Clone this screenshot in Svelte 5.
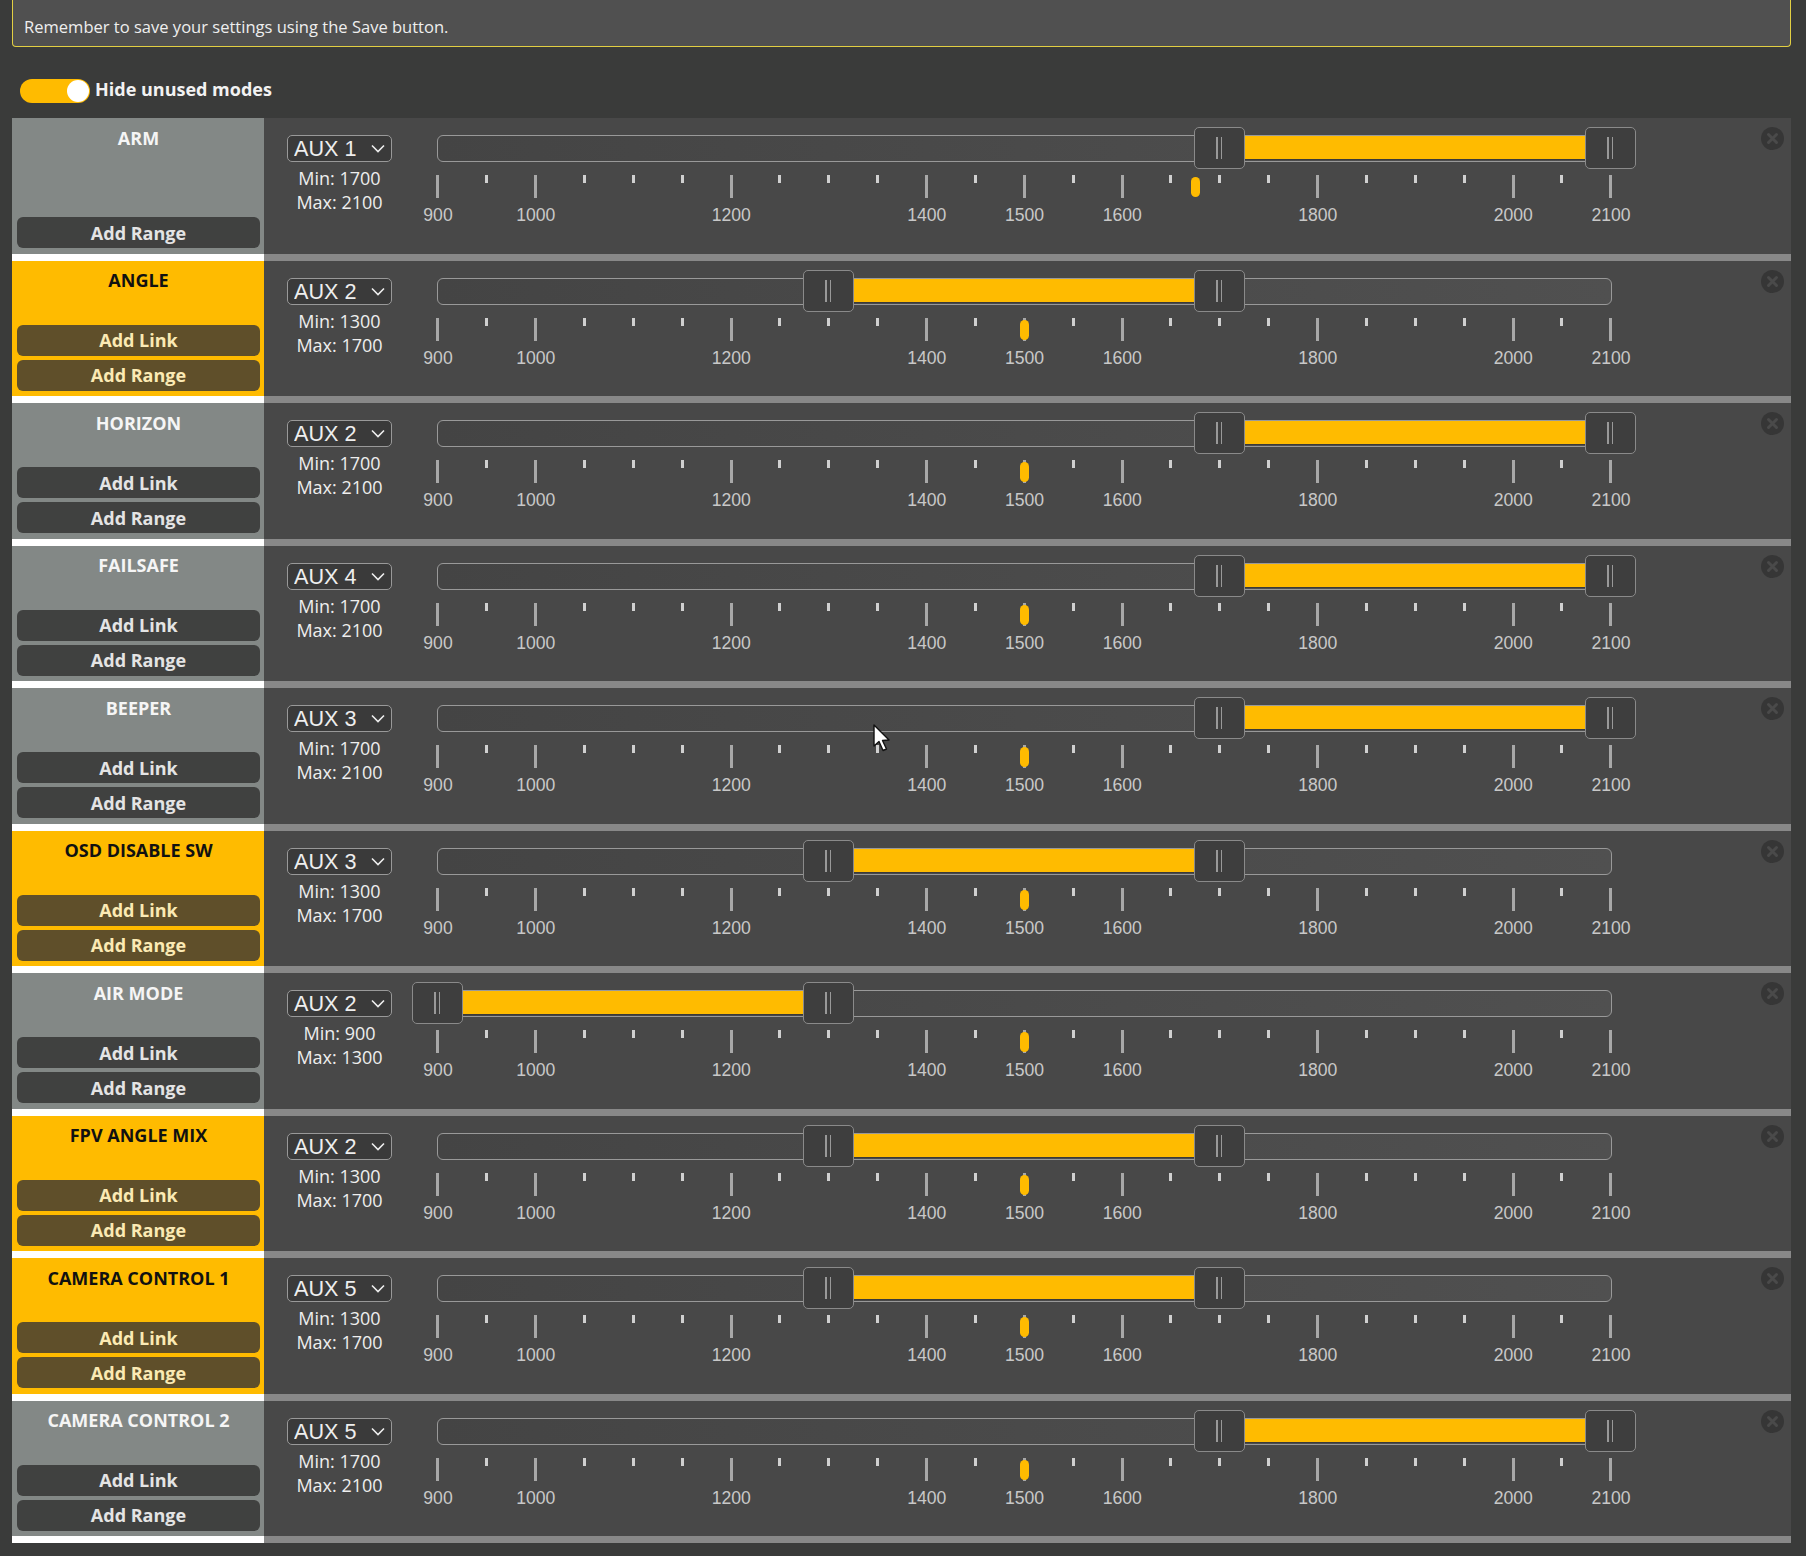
<script>
  const modes = [
    { name: 'ARM', aux: 'AUX 1', min: 1700, max: 2100, on: false, link: false, value: 1675 },
    { name: 'ANGLE', aux: 'AUX 2', min: 1300, max: 1700, on: true, link: true, value: 1500 },
    { name: 'HORIZON', aux: 'AUX 2', min: 1700, max: 2100, on: false, link: true, value: 1500 },
    { name: 'FAILSAFE', aux: 'AUX 4', min: 1700, max: 2100, on: false, link: true, value: 1500 },
    { name: 'BEEPER', aux: 'AUX 3', min: 1700, max: 2100, on: false, link: true, value: 1500 },
    { name: 'OSD DISABLE SW', aux: 'AUX 3', min: 1300, max: 1700, on: true, link: true, value: 1500 },
    { name: 'AIR MODE', aux: 'AUX 2', min: 900, max: 1300, on: false, link: true, value: 1500 },
    { name: 'FPV ANGLE MIX', aux: 'AUX 2', min: 1300, max: 1700, on: true, link: true, value: 1500 },
    { name: 'CAMERA CONTROL 1', aux: 'AUX 5', min: 1300, max: 1700, on: true, link: true, value: 1500 },
    { name: 'CAMERA CONTROL 2', aux: 'AUX 5', min: 1700, max: 2100, on: false, link: true, value: 1500 }
  ]

  const auxes = ['AUX 1', 'AUX 2', 'AUX 3', 'AUX 4', 'AUX 5']
  const big = [900, 1000, 1200, 1400, 1500, 1600, 1800, 2000, 2100]
  const small = [950, 1050, 1100, 1150, 1250, 1300, 1350, 1450, 1550, 1650, 1700, 1750, 1850, 1900, 1950, 2050]

  const pct = (v) => ((v - 900) / 1200) * 100
</script>

<div class="page">
  <div class="note">Remember to save your settings using the Save button.</div>

  <div class="filter">
    <span class="toggle"><span class="knob"></span></span>
    <span class="filter-label">Hide unused modes</span>
  </div>

  {#each modes as mode}
    <div class="mode">
      <div class="info" class:on={mode.on}>
        <div class="name">{mode.name}</div>
        <div class="buttons">
          {#if mode.link}
            <button>Add Link</button>
          {/if}
          <button>Add Range</button>
        </div>
      </div>

      <div class="range">
        <div class="channel">
          <div class="select-wrap">
            <select value={mode.aux}>
              {#each auxes as a}
                <option>{a}</option>
              {/each}
            </select>
            <svg class="chevron" viewBox="0 0 14 9" width="14" height="9">
              <path d="M1 1.5 L7 7.5 L13 1.5" fill="none" stroke="#eee" stroke-width="1.6" />
            </svg>
          </div>
          <div class="limits">Min: {mode.min}<br />Max: {mode.max}</div>
        </div>

        <div class="slider-col">
          <div class="track">
            <div
              class="connect"
              style="left: {pct(mode.min)}%; width: {pct(mode.max) - pct(mode.min)}%"
            ></div>
            {#each [mode.min, mode.max] as v}
              <div class="handle" style="left: {pct(v)}%"><i></i><i></i></div>
            {/each}
          </div>
          <div class="pips">
            {#each small as v}
              <span class="tick small" style="left: {pct(v)}%"></span>
            {/each}
            {#each big as v}
              <span class="tick big" style="left: {pct(v)}%"></span>
              <span class="pip-label" style="left: {pct(v)}%">{v}</span>
            {/each}
            <span class="marker" style="left: {pct(mode.value)}%"></span>
          </div>
        </div>

        <span class="delete">
          <svg viewBox="0 0 23 23" width="23" height="23">
            <circle cx="11.5" cy="11.5" r="11.5" fill="#363636" />
            <path d="M7.5 7.5 L15.5 15.5 M15.5 7.5 L7.5 15.5" stroke="#4a4a4a" stroke-width="3" stroke-linecap="round" />
          </svg>
        </span>
      </div>
    </div>
  {/each}

  <svg class="cursor" viewBox="0 0 19 29" width="19" height="29">
    <path d="M1 1 L1 22 L6 17.5 L10 26.5 L13.5 25 L9.5 16.5 L16 16 Z" fill="#fff" stroke="#111" stroke-width="1.4" stroke-linejoin="round" />
  </svg>
</div>

<style>
  :global(body) {
    margin: 0;
    background: #3a3b3a;
  }

  .page {
    position: relative;
    width: 1806px;
    height: 1556px;
    box-sizing: border-box;
    padding: 0 15px 0 12px;
    font-family: 'Open Sans', sans-serif;
    overflow: hidden;
  }

  .note {
    box-sizing: border-box;
    height: 47px;
    padding: 17px 11px 0;
    border: 1px solid #e2cf43;
    border-top: none;
    border-radius: 0 0 4px 4px;
    background: #505050;
    color: #eee;
    font-size: 16.55px;
    line-height: 20px;
  }

  .filter {
    display: flex;
    align-items: center;
    gap: 5px;
    height: 24px;
    margin: 32px 0 15px 8px;
  }

  .toggle {
    position: relative;
    width: 70px;
    height: 24px;
    border-radius: 12px;
    background: #ffbb00;
  }

  .knob {
    position: absolute;
    top: 1px;
    right: 1px;
    width: 22px;
    height: 22px;
    border-radius: 50%;
    background: #fff;
  }

  .filter-label {
    margin-top: -4px;
    color: #f2f2f2;
    font-size: 18px;
    font-weight: 700;
  }

  .mode {
    display: grid;
    grid-template-columns: 252px 1fr;
    height: 142.56px;
  }

  .info {
    display: flex;
    flex-direction: column;
    box-sizing: border-box;
    padding: 7.5px 4px 5.5px 5px;
    border-bottom: 7.3px solid #fff;
    background: #838886;
    color: #f5f5f5;
  }

  .info.on {
    background: #ffbb00;
    color: #111;
  }

  .name {
    height: 24px;
    font-size: 18px;
    line-height: 24px;
    font-weight: 700;
    text-align: center;
  }

  .buttons {
    display: flex;
    flex-direction: column;
    gap: 4px;
    margin-top: auto;
  }

  button {
    height: 31px;
    padding: 0;
    border: none;
    border-radius: 6px;
    background: #404140;
    color: #e4e4e4;
    font-family: inherit;
    font-size: 18px;
    font-weight: 700;
  }

  .info.on button {
    background: #5f4f2a;
    color: #fbeab4;
  }

  .range {
    position: relative;
    display: flex;
    box-sizing: border-box;
    padding: 17px 0 0 23px;
    border-bottom: 7.3px solid #888;
    background: #484848;
  }

  .channel {
    width: 105px;
    text-align: center;
  }

  .select-wrap {
    position: relative;
    height: 27px;
  }

  select {
    appearance: none;
    width: 100%;
    height: 27px;
    box-sizing: border-box;
    padding: 0 0 3px 6px;
    border: 1px solid #999;
    border-radius: 5px;
    background: #3a3a3a;
    color: #eee;
    font-family: 'Liberation Sans', sans-serif;
    font-size: 21.6px;
  }

  .chevron {
    position: absolute;
    top: 9px;
    right: 7px;
  }

  .limits {
    margin-top: 4px;
    color: #eee;
    font-size: 18px;
    line-height: 24px;
  }

  .slider-col {
    width: 1175px;
    margin-left: 45px;
  }

  .track {
    position: relative;
    box-sizing: border-box;
    height: 27px;
    border: 1px solid #999;
    border-radius: 6px;
    background: linear-gradient(90deg, #444, #505050);
  }

  .connect {
    position: absolute;
    top: 0;
    bottom: 1px;
    margin-left: -1px;
    border-bottom: 1px solid #3a3a3a;
    background: #ffbb00;
  }

  .handle {
    position: absolute;
    top: -9px;
    display: flex;
    justify-content: center;
    align-items: center;
    gap: 3px;
    box-sizing: border-box;
    width: 51px;
    height: 42px;
    margin-left: -26.25px;
    border: 1px solid #8a8a8a;
    border-radius: 5px;
    background: #3e3e3e;
  }

  .handle i {
    width: 1.5px;
    height: 22px;
    background: #999;
  }

  .pips {
    position: relative;
    height: 60px;
    margin: 0 1px;
  }

  .tick {
    position: absolute;
    top: 13px;
    width: 3px;
    margin-left: -1.75px;
  }

  .tick.big {
    height: 23px;
    background: #a8a8a8;
  }

  .tick.small {
    height: 8px;
    background: #d0d0d0;
  }

  .pip-label {
    position: absolute;
    top: 43px;
    color: #c8c8c8;
    font-family: 'Liberation Sans', sans-serif;
    font-size: 17.6px;
    line-height: 20px;
    transform: translateX(-50%);
  }

  .marker {
    position: absolute;
    top: 15px;
    width: 9px;
    height: 20px;
    margin-left: -4.5px;
    border-radius: 4.5px;
    background: #ffbb00;
  }

  .delete {
    position: absolute;
    top: 9px;
    left: 1497px;
    height: 23px;
  }

  .cursor {
    position: absolute;
    top: 724px;
    left: 873px;
  }
</style>
